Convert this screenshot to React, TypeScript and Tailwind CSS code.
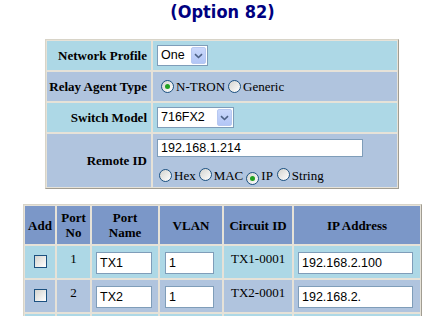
import React from "react";

const serif = "font-['Liberation_Serif',serif]";
const sans = "font-['Liberation_Sans',Arial,sans-serif]";

function Radio({ checked = false }: { checked?: boolean }) {
  return (
    <span className="inline-flex items-center justify-center w-[13px] h-[13px] rounded-full border border-[#1c5180] bg-linear-to-br from-[#d4d4cf] to-white shrink-0">
      {checked && <span className="w-[5px] h-[5px] rounded-full bg-[#21a121]" />}
    </span>
  );
}

function Checkbox() {
  return (
    <span className="inline-block w-[13px] h-[13px] border border-[#1c5180] bg-linear-to-br from-[#d4d4cf] to-white" />
  );
}

function Select({ value, w }: { value: string; w: string }) {
  return (
    <div className={`flex items-center justify-between bg-white border border-[#7f9db9] h-[21px] ${w} pl-[3px] pr-[1px]`}>
      <span className={`${sans} text-[12.5px] text-black leading-none`}>{value}</span>
      <span className="flex items-center justify-center w-[15px] h-[17px] rounded-[2px] border border-[#b7c8f1] bg-linear-to-b from-[#cad8fb] to-[#b2c6f6]">
        <svg width="9" height="6" viewBox="0 0 9 6">
          <path d="M1 1.2 L4.5 4.5 L8 1.2" fill="none" stroke="#4d6185" strokeWidth="1.6" />
        </svg>
      </span>
    </div>
  );
}

function TextInput({ value, w }: { value: string; w: string }) {
  return (
    <div className={`flex items-center bg-white border border-[#7f9db9] h-[22px] ${w} pl-[3px]`}>
      <span className={`${sans} text-[12.5px] text-black leading-none`}>{value}</span>
    </div>
  );
}

const label = `flex items-center justify-end pr-[4px] ${serif} font-bold text-[13px] text-black`;
const radioText = `${serif} text-[13px] text-black leading-none`;

export default function App() {
  return (
    <div className="w-[432px] h-[316px] overflow-hidden bg-white">
      <div className="w-[445px]">
        <div className="h-[39px] text-center">
          <span className="font-['DejaVu_Sans_Condensed',sans-serif] font-bold text-[18px] text-[#000080] leading-[24px]">
            (Option 82)
          </span>
        </div>

        <div className="ml-[45px] w-[354px] border border-t-[#d8d4c8] border-l-[#d8d4c8] border-r-[#a19d92] border-b-[#a19d92] p-[1px] bg-[#e6e2d8] grid grid-cols-[104px_244px] grid-rows-[29px_29px_29px_53px] gap-[2px]">
          <div className={`${label} bg-[#add8e6]`}>Network Profile</div>
          <div className="flex items-center pl-[4px] bg-[#add8e6]">
            <Select value="One" w="w-[51px]" />
          </div>

          <div className={`${label} bg-[#b0c4de]`}>Relay Agent Type</div>
          <div className="flex items-center pl-[8px] bg-[#b0c4de]">
            <Radio checked />
            <span className={`${radioText} ml-[2px]`}>N-TRON</span>
            <span className="ml-[3px]"><Radio /></span>
            <span className={`${radioText} ml-[2px]`}>Generic</span>
          </div>

          <div className={`${label} bg-[#add8e6]`}>Switch Model</div>
          <div className="flex items-center pl-[4px] bg-[#add8e6]">
            <Select value="716FX2" w="w-[77px]" />
          </div>

          <div className={`${label} bg-[#b0c4de]`}>Remote ID</div>
          <div className="flex flex-col pl-[4px] pt-[5px] bg-[#b0c4de]">
            <TextInput value="192.168.1.214" w="w-[206px]" />
            <div className="flex items-center mt-[6px] pl-[2px]">
              <Radio />
              <span className={`${radioText} ml-[2px]`}>Hex</span>
              <span className="ml-[3px]"><Radio /></span>
              <span className={`${radioText} ml-[2px]`}>MAC</span>
              <span className="ml-[3px]"><Radio checked /></span>
              <span className={`${radioText} ml-[2px]`}>IP</span>
              <span className="ml-[4px]"><Radio /></span>
              <span className={`${radioText} ml-[2px]`}>String</span>
            </div>
          </div>
        </div>

        <div className="mt-[15px] ml-[23px] w-[399px] border border-t-[#d8d4c8] border-l-[#d8d4c8] border-r-[#a19d92] border-b-[#a19d92] p-[1px] bg-[#e6e2d8] grid grid-cols-[30px_33px_66px_62px_68px_126px] grid-rows-[38px_32px_32px_32px] gap-[2px]">
          {["Add", "Port No", "Port Name", "VLAN", "Circuit ID", "IP Address"].map((h) => (
            <div
              key={h}
              className={`flex items-center justify-center text-center bg-[#7b97c8] ${serif} font-bold text-[13px] leading-[15px] text-black px-[2px]`}
            >
              {h === "Port No" ? (
                <span>Port<br />No</span>
              ) : h === "Port Name" ? (
                <span>Port<br />Name</span>
              ) : (
                h
              )}
            </div>
          ))}

          {[
            { n: "1", name: "TX1", vlan: "1", cid: "TX1-0001", ip: "192.168.2.100", bg: "bg-[#add8e6]" },
            { n: "2", name: "TX2", vlan: "1", cid: "TX2-0001", ip: "192.168.2.", bg: "bg-[#b0c4de]" },
          ].map((r) => (
            <React.Fragment key={r.n}>
              <div className={`flex justify-center pt-[9px] ${r.bg}`}>
                <Checkbox />
              </div>
              <div className={`flex justify-center pt-[5px] ${r.bg} ${serif} text-[13px] leading-[15px] text-black`}>
                {r.n}
              </div>
              <div className={`pl-[4px] pt-[6px] ${r.bg}`}>
                <TextInput value={r.name} w="w-[56px]" />
              </div>
              <div className={`pl-[5px] pt-[6px] ${r.bg}`}>
                <TextInput value={r.vlan} w="w-[49px]" />
              </div>
              <div className={`pl-[7px] pt-[5px] ${r.bg} ${serif} text-[13px] leading-[15px] text-black`}>
                {r.cid}
              </div>
              <div className={`pl-[4px] pt-[6px] ${r.bg}`}>
                <TextInput value={r.ip} w="w-[115px]" />
              </div>
            </React.Fragment>
          ))}
          {[0, 1, 2, 3, 4, 5].map((i) => (
            <div key={i} className="bg-[#add8e6]" />
          ))}
        </div>
      </div>
    </div>
  );
}
